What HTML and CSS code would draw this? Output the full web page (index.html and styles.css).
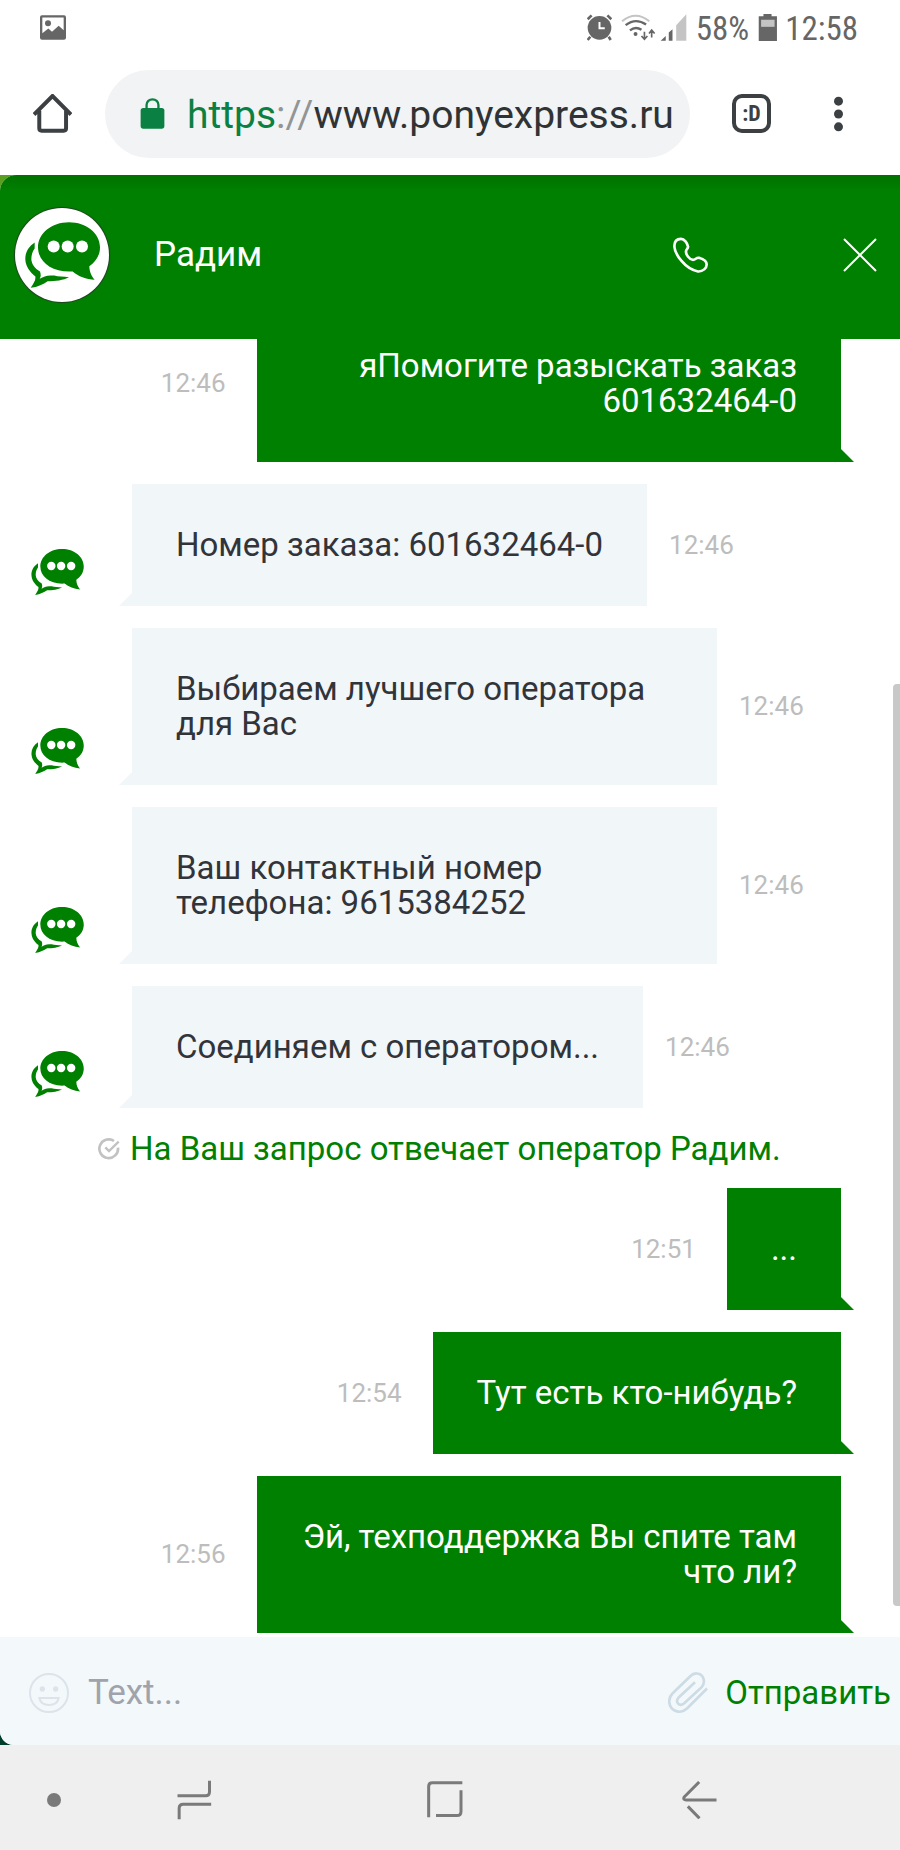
FILE: index.html
```html
<!DOCTYPE html>
<html lang="ru">
<head>
<meta charset="utf-8">
<meta name="viewport" content="width=device-width, initial-scale=1">
<title>Чат с оператором</title>
<link rel="stylesheet" href="styles.css">
</head>
<body>
<svg class="sprite" aria-hidden="true">
  <symbol id="chat-logo" viewBox="0 0 225 197">
    <path fill="#008000" d="M132 0C184 0 225 33 225 75C225 100 212 119 193 132C193 147 200 163 209 173C183 171 160 163 143 148C80 152 39 118 39 75C39 33 80 0 132 0Z"/>
    <path fill="#008000" d="M29 61C10 74 0 92 1 112C2 134 15 149 31 163C33 174 25 184 17 197C39 194 55 186 68 177C92 177 115 174 132 165C115 163 99 164 88 160C72 160 61 161 52 166L44 170C49 162 47 154 45 148C29 138 20 126 19 111C19 95 25 84 29 79Z"/>
    <circle fill="#fff" cx="86" cy="73" r="18"/>
    <circle fill="#fff" cx="128" cy="73" r="18"/>
    <circle fill="#fff" cx="171" cy="73" r="18"/>
  </symbol>
</svg>
<div class="screen">
  <header class="status">
    <svg class="status-photo" viewBox="0 0 78 74" width="26" height="25" aria-hidden="true">
      <path fill="#666" fill-rule="evenodd" d="M6 0H72Q78 0 78 6V68Q78 74 72 74H6Q0 74 0 68V6Q0 0 6 0ZM7 7V54L25 40L36 50L56 32L71 45V7Z"/>
      <circle fill="#666" cx="24" cy="24" r="9"/>
    </svg>
    <div class="status-right">
      <svg viewBox="410 42 76 80" width="25" height="27" aria-hidden="true">
        <circle cx="448" cy="83" r="36" fill="#666"/>
        <path d="M420 110L412 120M476 110L482 120" stroke="#666" stroke-width="8"/>
        <path d="M412 57L424 45M484 57L472 45" stroke="#666" stroke-width="8"/>
        <path d="M448 65V84H464" fill="none" stroke="#fff" stroke-width="6"/>
      </svg>
      <svg class="wifi" viewBox="518 40 106 82" width="35" height="27" aria-hidden="true">
        <path d="M521 62Q562 28 604 62" fill="none" stroke="#c4c4c4" stroke-width="6"/>
        <path d="M532 74Q562 50 594 72M545 90Q562 76 580 88" fill="none" stroke="#666" stroke-width="7"/>
        <circle cx="562" cy="101" r="6" fill="#666"/>
        <path d="M589 94V116M580 107L589 117L598 107M611 111V90M603 99L611 89L620 99" fill="none" stroke="#666" stroke-width="5"/>
      </svg>
      <svg class="signal" viewBox="636 42 80 80" width="27" height="27" aria-hidden="true">
        <path d="M638 121L653 107V121ZM662 97L673 87V121H662Z" fill="#666"/>
        <path d="M684 75L714 43V121H684Z" fill="#c4c4c4"/>
      </svg>
      <span>58%</span>
      <svg class="battery" viewBox="928 41 56 80" width="19" height="27" aria-hidden="true">
        <path d="M944 41H968V48H984V121H930V48H944Z" fill="#666"/>
        <path d="M937 58H977V79H937Z" fill="#c4c4c4"/>
      </svg>
      <span>12:58</span>
    </div>
  </header>

  <nav class="toolbar" aria-label="Браузер">
    <button class="icon-button" aria-label="Домой">
      <svg viewBox="100 282 118 118" width="39" height="39">
        <path d="M103 344L159 288L215 344M119 333V386Q119 393 126 393H193Q200 393 200 386V333" fill="none" stroke="#3c4043" stroke-width="12"/>
      </svg>
    </button>
    <a class="address" href="#">
      <svg viewBox="422 292 74 94" width="25" height="31" aria-hidden="true">
        <rect x="423" y="322" width="72" height="63" rx="8" fill="#0b8043"/>
        <path d="M441 325V313A18 17 0 0 1 477 313V325" fill="none" stroke="#0b8043" stroke-width="7"/>
      </svg>
      <span class="url"><span class="scheme">https</span><span class="slashes">://</span>www.ponyexpress.ru</span>
    </a>
    <button class="tabs" aria-label="Вкладки">:D</button>
    <button class="icon-button" aria-label="Меню">
      <svg viewBox="0 0 28 108" width="9" height="36">
        <g fill="#3c4043"><circle cx="14" cy="14" r="14"/><circle cx="14" cy="54" r="14"/><circle cx="14" cy="94" r="14"/></g>
      </svg>
    </button>
  </nav>

  <main class="widget-wrap">
    <section class="widget">
      <header class="chat-head">
        <span class="operator-avatar"><svg width="75" height="66" aria-hidden="true"><use href="#chat-logo"/></svg></span>
        <h1>Радим</h1>
        <button class="icon-button call" aria-label="Позвонить">
          <svg viewBox="0 0 105 107" width="35" height="36">
            <path d="M24 5C10 5 4 15 4 27C5 50 35 95 75 103C90 104 101 92 101 82C101 72 88 65 78 62C70 60 68 68 60 68C50 68 38 52 39 42C40 36 46 34 45 28C43 18 34 5 24 5Z" fill="none" stroke="#fff" stroke-width="8"/>
          </svg>
        </button>
        <button class="icon-button" aria-label="Закрыть">
          <svg viewBox="0 0 34 34" width="34" height="34">
            <path d="M1 1L33 33M33 1L1 33" stroke="#fff" stroke-width="2"/>
          </svg>
        </button>
      </header>

      <div class="log-area">
        <ol class="log">
          <li class="message out"><time>12:46</time><p>яПомогите разыскать заказ 601632464-0</p></li>
          <li class="message in"><span class="sender"><svg width="53" height="46" aria-hidden="true"><use href="#chat-logo"/></svg></span><p>Номер заказа: 601632464-0</p><time>12:46</time></li>
          <li class="message in"><span class="sender"><svg width="53" height="46" aria-hidden="true"><use href="#chat-logo"/></svg></span><p>Выбираем лучшего оператора для Вас</p><time>12:46</time></li>
          <li class="message in"><span class="sender"><svg width="53" height="46" aria-hidden="true"><use href="#chat-logo"/></svg></span><p>Ваш контактный номер телефона: 9615384252</p><time>12:46</time></li>
          <li class="message in"><span class="sender"><svg width="53" height="46" aria-hidden="true"><use href="#chat-logo"/></svg></span><p>Соединяем с оператором...</p><time>12:46</time></li>
          <li class="notice">
            <svg viewBox="0 0 66 66" width="22" height="22" aria-hidden="true">
              <path d="M48 9A28 28 0 1 0 60 29" fill="none" stroke="#c2c2c2" stroke-width="8"/>
              <path d="M22 28L33 39L62 11" fill="none" stroke="#c2c2c2" stroke-width="7"/>
            </svg>
            <span>На Ваш запрос отвечает оператор Радим.</span>
          </li>
          <li class="message out"><time>12:51</time><p>...</p></li>
          <li class="message out"><time>12:54</time><p>Тут есть кто-нибудь?</p></li>
          <li class="message out"><time>12:56</time><p>Эй, техподдержка Вы спите там что ли?</p></li>
        </ol>
        <span class="scroll-thumb"></span>
      </div>

      <form class="composer">
        <button type="button" class="icon-button" aria-label="Смайлы">
          <svg viewBox="0 0 120 120" width="40" height="40">
            <g fill="none" stroke="#dce3ea" stroke-width="6"><circle cx="60" cy="60" r="57"/><path d="M31 75H89C86 90 75 96 60 96C45 96 34 90 31 75Z"/></g>
            <circle cx="40" cy="48" r="8" fill="#dce3ea"/><circle cx="80" cy="48" r="8" fill="#dce3ea"/>
          </svg>
        </button>
        <input type="text" placeholder="Text..." aria-label="Сообщение">
        <button type="button" class="icon-button" aria-label="Прикрепить файл">
          <svg viewBox="650 214 120 122" width="40" height="41">
            <path d="M731 244L682 290C670 304 684 319 698 308L751 259C764 243 757 220 737 218C729 217 722 221 716 227L664 277C647 294 653 321 670 329C682 335 697 332 707 323L767 263" fill="none" stroke="#ccdbe4" stroke-width="8"/>
          </svg>
        </button>
        <button type="submit" class="send">Отправить</button>
      </form>
    </section>
  </main>

  <nav class="system-nav" aria-label="Система">
    <button class="icon-button" aria-label="Закрепить"><svg viewBox="0 0 14 14" width="14" height="14"><circle cx="7" cy="7" r="7" fill="#7a7a7a"/></svg></button>
    <button class="icon-button" aria-label="Недавние">
      <svg viewBox="532 540 104 120" width="35" height="40"><path d="M533 587H617Q629 587 629 575V542M538 658V625Q538 613 550 613H634" fill="none" stroke="#7a7a7a" stroke-width="9"/></svg>
    </button>
    <button class="icon-button" aria-label="Главный экран">
      <svg viewBox="0 0 108 110" width="36" height="37"><path d="M5 108V16Q5 5 16 5H106M102 27V90Q102 103 90 103H27" fill="none" stroke="#7a7a7a" stroke-width="9"/></svg>
    </button>
    <button class="icon-button" aria-label="Назад">
      <svg viewBox="694 543 104 114" width="35" height="38"><path d="M745 546L700 591Q696 600 706 600H797M711 619L746 655" fill="none" stroke="#7a7a7a" stroke-width="9"/></svg>
    </button>
  </nav>
</div>
</body>
</html>
```
FILE: styles.css
```css
* {
  box-sizing: border-box;
}

body {
  margin: 0;
  background: #fff;
  color: #313539;
  font-family: Roboto, "Noto Sans", sans-serif;
  font-size: 33px;
  line-height: 35px;
}

button,
input {
  padding: 0;
  border: 0;
  background: none;
  font: inherit;
}

svg {
  display: block;
  flex: none;
}

.sprite {
  position: absolute;
  width: 0;
  height: 0;
}

.icon-button {
  display: flex;
  flex: none;
}

.screen {
  display: flex;
  flex-direction: column;
  height: 100vh;
}

/* Status bar */

.status {
  display: flex;
  justify-content: space-between;
  align-items: center;
  height: 54px;
  padding: 1px 42px 0 40px;
  color: #666;
  font-family: "Roboto Condensed", Roboto, sans-serif;
}

.status-right {
  display: flex;
  align-items: center;
  gap: 9px;
}

.status-right span {
  padding-top: 2px;
}

.battery {
  margin-right: -1px;
}

.signal {
  margin-left: -5px;
}

/* Browser toolbar */

.toolbar {
  display: flex;
  align-items: center;
  height: 121px;
  padding: 0 57px 2px 33px;
}

.address {
  display: flex;
  flex: 1;
  align-items: center;
  gap: 22px;
  min-width: 0;
  height: 88px;
  margin: 0 42px 0 33px;
  padding: 0 10px 0 35px;
  border-radius: 44px;
  background: #f1f3f4;
  color: #303336;
  font-size: 39px;
  line-height: 48px;
  text-decoration: none;
}

.url {
  overflow: hidden;
  padding-top: 2px;
  white-space: nowrap;
}

.scheme {
  color: #0b8043;
}

.slashes {
  color: #929496;
}

.tabs {
  width: 39px;
  height: 39px;
  margin-right: 63px;
  border: 4px solid #3c4043;
  border-radius: 10px;
  color: #3c4043;
  font-family: "Roboto Condensed", Roboto, sans-serif;
  font-size: 22px;
  font-weight: 700;
  line-height: 31px;
}

/* Chat widget */

.widget-wrap {
  display: flex;
  flex: 1;
  min-height: 0;
  background: linear-gradient(#5aa01e 50%, #003d2b 50%);
}

.widget {
  display: flex;
  flex: 1;
  flex-direction: column;
  min-width: 0;
  overflow: hidden;
  border-radius: 16px 0 0 14px;
  background: #fff;
}

.chat-head {
  display: flex;
  align-items: center;
  height: 164px;
  padding: 0 23px 5px 15px;
  background: linear-gradient(#007200, #008000 16px);
  color: #fff;
}

.operator-avatar {
  display: flex;
  align-items: center;
  justify-content: center;
  width: 94px;
  height: 94px;
  border-radius: 50%;
  background: #fff;
  box-shadow: 0 0 1px 1px #204020;
}

.chat-head h1 {
  flex: 1;
  margin: 0 0 0 45px;
  font-size: 35px;
  font-weight: 400;
}

.call {
  margin-right: 135px;
}

.log-area {
  position: relative;
  display: flex;
  flex: 1;
  flex-direction: column;
  justify-content: flex-end;
  min-height: 0;
  overflow: hidden;
}

.log {
  display: flex;
  flex-direction: column;
  gap: 22px;
  margin: 0;
  padding: 0 0 4px;
  list-style: none;
}

.message {
  display: flex;
  align-items: center;
}

.message p {
  position: relative;
  max-width: 65%;
  margin: 0;
  padding: 43px 44px 44px;
}

.message p::after {
  content: "";
  position: absolute;
  bottom: 0;
  width: 13px;
  height: 13px;
  background: inherit;
}

.message time {
  color: #bdbdbd;
  font-size: 26px;
}

.in p {
  background: #f1f6f9;
}

.in p::after {
  right: 100%;
  clip-path: polygon(100% 0, 100% 100%, 0 100%);
}

.in time {
  margin-left: 22px;
}

.sender {
  display: flex;
  flex: none;
  align-self: flex-end;
  width: 132px;
  padding: 0 0 11px 31px;
}

.out {
  justify-content: flex-end;
  padding-right: 59px;
}

.out p {
  max-width: 69.5%;
  background: #008000;
  color: #fff;
  text-align: right;
}

.out p::after {
  left: 100%;
  clip-path: polygon(0 0, 100% 100%, 0 100%);
}

.out time {
  margin-right: 31px;
}

.notice {
  display: flex;
  align-items: center;
  gap: 10px;
  padding: 1px 59px 0 98px;
  color: #008000;
}

.scroll-thumb {
  position: absolute;
  top: 26.6%;
  right: 0;
  bottom: 31px;
  width: 7px;
  border-radius: 4px 0 0 4px;
  background: #c8c8c8;
}

/* Message composer */

.composer {
  display: flex;
  align-items: center;
  height: 108px;
  padding: 3px 9px 0 29px;
  background: #f3f8fb;
}

.composer input {
  flex: 1;
  min-width: 0;
  margin: 0 19px;
  color: #313539;
  font-size: 35px;
}

.composer input::placeholder {
  color: #a0a3ab;
  opacity: 1;
}

.send {
  margin-left: 17px;
  color: #008000;
}

/* System navigation */

.system-nav {
  display: grid;
  grid-template-columns: 107fr 174fr 328fr 180fr 111fr;
  align-items: center;
  justify-items: center;
  height: 105px;
  padding-top: 4px;
  background: #efefef;
}
```
